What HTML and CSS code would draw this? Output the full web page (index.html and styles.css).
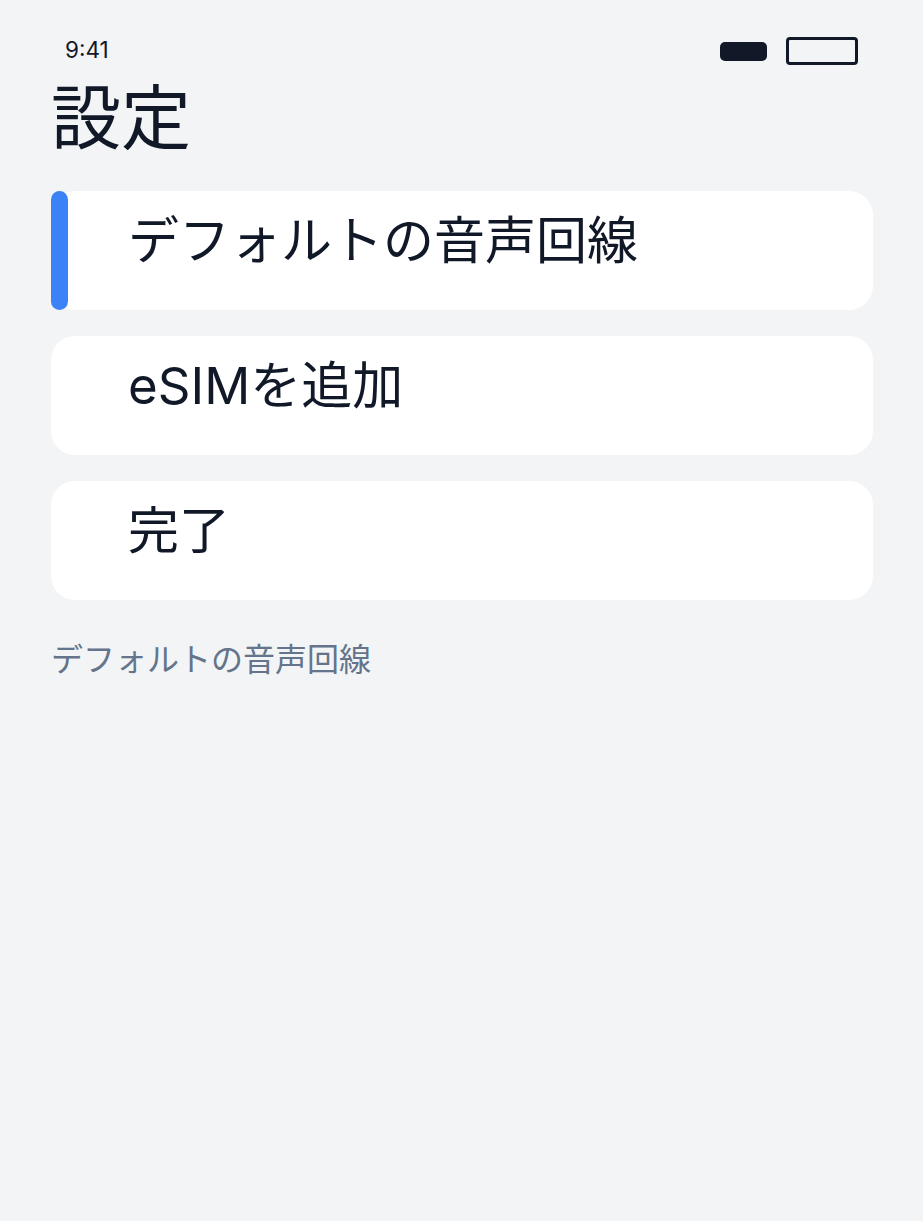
FILE: index.html
```html
<!DOCTYPE html>
<html lang="ja">
<head>
    <meta charset="UTF-8">
    <meta name="viewport" content="width=device-width, initial-scale=1.0">
    <title>設定</title>
    <link rel="stylesheet" href="styles.css">
</head>
<body>
    <div class="screen">
        <div class="status">
            <span class="time">9:41</span>
            <div class="status-icons">
                <span class="pill"></span>
                <span class="battery"></span>
            </div>
        </div>
        <h1 class="title">設定</h1>
        <div class="list">
            <div class="item active"><span class="bar"></span>デフォルトの音声回線</div>
            <div class="item">eSIMを追加</div>
            <div class="item">完了</div>
        </div>
        <p class="caption">デフォルトの音声回線</p>
    </div>
</body>
</html>
```

FILE: styles.css
```css
body {
    margin: 0;
    background-color: #f3f4f6;
    color: #111827;
    font-family: Inter, "Noto Sans CJK JP", sans-serif;
}

.screen {
    padding: 0 50px 0 51px;
}

.status {
    display: flex;
    justify-content: space-between;
    align-items: center;
    height: 30px;
    padding-top: 36px;
}

.time {
    font-size: 22.5px;
    margin-left: 14px;
    margin-top: -3px;
}

.status-icons {
    display: flex;
    align-items: center;
    gap: 19px;
    margin-right: 15px;
}

.pill {
    width: 47px;
    height: 19px;
    border-radius: 5px;
    background-color: #111827;
}

.battery {
    width: 66px;
    height: 22px;
    border: 3px solid #111827;
    border-radius: 4px;
}

.title {
    margin: 18px 0 0;
    font-size: 70px;
    font-weight: 400;
    line-height: 1;
}

.list {
    display: flex;
    flex-direction: column;
    gap: 26px;
    margin-top: 37px;
}

.item {
    position: relative;
    height: 119px;
    box-sizing: border-box;
    padding: 20px 0 0 77px;
    background: white;
    border-radius: 24px;
    font-size: 51px;
    line-height: 60px;
}

.bar {
    position: absolute;
    left: 0;
    top: 0;
    width: 17px;
    height: 100%;
    border-radius: 9px;
    background-color: #3b82f6;
}

.caption {
    margin: 34px 0 0;
    font-size: 32px;
    color: #64748b;
}
```
